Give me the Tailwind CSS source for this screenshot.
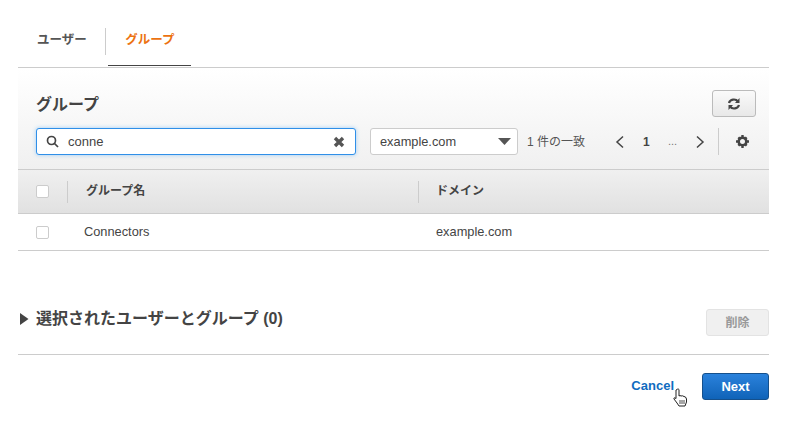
<!DOCTYPE html>
<html><head><meta charset="utf-8"><script src="https://cdn.jsdelivr.net/npm/@tailwindcss/browser@4"></script></head>
<body class="bg-white">
<div class="relative w-[788px] h-[429px] overflow-hidden pl-[18px] pr-[19px] font-['Liberation_Sans','Noto_Sans_CJK_JP',sans-serif] text-[13px] text-[#444]">
  <div class="h-[68px] pt-[13px] border-b border-[#ccc] flex items-stretch">
    <div class="flex items-start h-[54px] pt-[15px]">
      <div class="w-[88px] h-[27px] flex pl-[19px] pt-[5px] border-r border-[#ccc] font-bold text-[12.5px] text-[#555] mr-[2px] leading-[14px]">ユーザー</div>
    </div>
    <div class="w-[83px] h-[53px] border-b border-[#444] flex justify-center pt-[20px] pl-[1px] font-bold text-[12.5px] text-[#ec7211] leading-[14px]">グループ</div>
  </div>
  <div class="h-[101px] bg-linear-to-b from-white to-[#f0f0f0] border-b border-[#ccc] mt-[1px] pt-[21px] px-[18px]">
    <div class="flex justify-between items-start h-[40px]">
      <div class="font-bold text-[16px] text-[#444] leading-[30px]">グループ</div>
      <div class="w-[44px] h-[27px] mr-[-5px] rounded-[3px] border border-[#bbb] bg-linear-to-b from-[#fafafa] to-[#e8e8e8] flex items-center justify-center">
        <svg width="14" height="14" viewBox="0 0 14 14" fill="none" stroke="#444" stroke-width="2.200"><path d="M2 6a5 4.500 0 0 1 9-1.500"/><path d="M12 8a5 4.500 0 0 1-9 1.500"/><path d="M12.500 1v5H8" fill="#444" stroke="none"/><path d="M1.500 13V8H6" fill="#444" stroke="none"/></svg>
      </div>
    </div>
    <div class="flex items-center -mt-[2px]">
      <div class="w-[320px] h-[27px] rounded-[3px] border border-[#2f8fe8] bg-white shadow-[0_0_4px_#9fcdf5] flex items-center pl-[9px] pr-[10px]">
        <svg width="13" height="13" viewBox="0 0 13 13" fill="none" stroke="#444" stroke-width="1.700"><circle cx="5.500" cy="5.500" r="4"/><path d="M8.500 8.500l3.500 3.500"/></svg>
        <span class="ml-[9px] flex-1 text-[#444] text-[13px]">conne</span>
        <svg width="12" height="12" viewBox="0 0 12 12" stroke="#555" stroke-width="3.400"><path d="M2 2l8 8M10 2l-8 8"/></svg>
      </div>
      <div class="w-[148px] h-[27px] ml-[14px] rounded-[3px] border border-[#ccc] bg-white flex items-center justify-between pl-[9px] pr-[4px] text-[12.8px]">
        <span>example.com</span>
        <svg width="16" height="9" viewBox="0 0 16 9"><path d="M1 1h13l-6.500 7z" fill="#555"/></svg>
      </div>
      <span class="ml-[9px] text-[12px] w-[70px] text-[#555]">1 件の一致</span>
      <svg class="ml-[18px]" width="10" height="14" viewBox="0 0 10 14" fill="none" stroke="#444" stroke-width="1.500"><path d="M8 1.500L2 7l6 5.500"/></svg>
      <span class="ml-[18px] font-bold text-[12px] w-[8px]">1</span>
      <span class="ml-[17px] text-[11px] w-[12px] text-[#777]">...</span>
      <svg class="ml-[15px]" width="10" height="14" viewBox="0 0 10 14" fill="none" stroke="#444" stroke-width="1.500"><path d="M2 1.500L8 7l-6 5.500"/></svg>
      <div class="ml-[13px] w-px h-[27px] bg-[#ccc]"></div>
      <svg class="ml-[17px]" width="13" height="13" viewBox="0 0 13 13"><circle cx="6.500" cy="6.500" r="3.800" fill="none" stroke="#444" stroke-width="2.600"/><path d="M5.300 0h2.400v3H5.300zM5.300 10h2.400v3H5.300zM0 5.300h3v2.400H0zM10 5.300h3v2.400h-3zM1.500 3.200L3.200 1.500l2 2-1.700 1.700zM9.800 11.500l1.700-1.700-2-2-1.700 1.700zM11.500 3.200L9.800 1.500l-2 2 1.700 1.700zM3.200 11.500l-1.700-1.700 2-2 1.700 1.700z" fill="#444"/></svg>
    </div>
  </div>
  <div class="h-[44px] bg-linear-to-b from-[#f0f0f0] to-[#e1e1e1] border-b border-[#ccc] flex items-center font-bold text-[12px] text-[#444]">
    <div class="ml-[18px] w-[13px] h-[13px] bg-white border border-[#ccc] rounded-[2px]"></div>
    <div class="ml-[18px] w-px h-[22px] bg-[#ccc]"></div>
    <span class="ml-[18px] w-[332px] pb-[2px]">グループ名</span>
    <div class="w-px h-[22px] bg-[#ccc]"></div>
    <span class="ml-[17px] pb-[2px]">ドメイン</span>
  </div>
  <div class="h-[37px] border-b border-[#ccc] flex items-center text-[12.8px]">
    <div class="ml-[18px] w-[13px] h-[13px] bg-white border border-[#ccc] rounded-[2px]"></div>
    <span class="ml-[35px] w-[352px]">Connectors</span>
    <span>example.com</span>
  </div>
  <div class="h-[104px] border-b border-[#ccc] flex items-center justify-between pt-[33px]">
    <div class="flex items-center">
      <svg class="ml-[2px]" width="9" height="12" viewBox="0 0 9 12"><path d="M0 0l8.500 6L0 12z" fill="#444"/></svg>
      <span class="ml-[7px] font-bold text-[16px] text-[#444]">選択されたユーザーとグループ (0)</span>
    </div>
    <div class="w-[63px] h-[27px] rounded-[3px] border border-[#e3e3e3] bg-[#f0f0f0] flex items-center justify-center font-bold text-[12px] text-[#999] mt-[7px]">削除</div>
  </div>
  <div class="flex justify-end items-center mt-[18px]">
    <span class="font-bold text-[13px] text-[#0f6cc0] pb-[2px]">Cancel</span>
    <div class="ml-[28px] w-[67px] h-[27px] rounded-[3px] border border-[#15508c] bg-linear-to-b from-[#2a82dc] to-[#0f63b8] flex items-center justify-center font-bold text-[13px] text-white">Next</div>
  </div>
  <svg class="absolute left-[673px] top-[388px]" width="16" height="20" viewBox="0 0 16 20"><path d="M4 1.500c1-1 2-.5 2 .5v6l1-.5 1 .5 1.500-.2 1.500.7 1.500.5 1 2v3l-1.500 4H6l-2-3-3-4c-.5-1.500.800-1.500 2-.5V2z" fill="#fff" stroke="#222" stroke-width="1"/><path d="M7 12v4M9 12v4M11 12v4" stroke="#222" stroke-width=".8"/></svg>
</div>
</body></html>
